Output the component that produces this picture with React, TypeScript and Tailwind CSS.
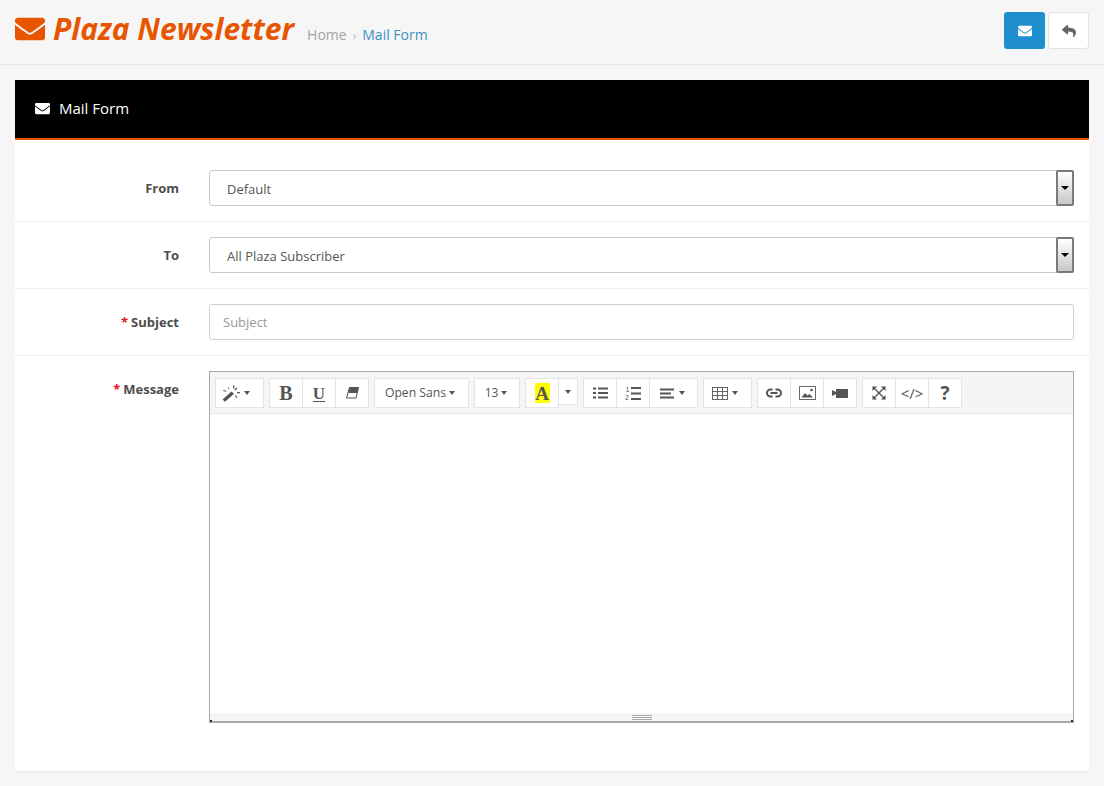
import { ReactNode } from 'react'
import { FaEnvelope, FaReply } from 'react-icons/fa'

const Caret = () => <span className="inline-block border-x-[3.5px] border-t-[4px] border-x-transparent border-t-[#555]" />

const WandIcon = () => (
  <svg width="19" height="17" viewBox="0 0 19 17" fill="#555">
    <path d="M0.500 14.500L9.500 6.500l2.500 2.200-9 8z" />
    <path d="M6 1.500l1.500 2.500-1 .5zM11 0.500h1.300v3H11zM14.500 2.500l1 1-2.500 2-.8-.8zM15 7h3v1.200h-3zM13.500 10l2 2.500-1 .5-1.700-2.300zM1.500 5l3 .8-.3 1-3-.8z" />
  </svg>
)

const EraserIcon = () => (
  <svg width="13" height="12" viewBox="0 0 13 12">
    <path d="M3.500 0.500H12.500L10 11H0.500z" fill="none" stroke="#555" strokeWidth="1" />
    <path d="M3.500 0.500H12.500L11.200 6H2.100z" fill="#555" />
  </svg>
)

const ListUlIcon = () => (
  <svg width="15" height="12" viewBox="0 0 15 12" fill="#555">
    <path d="M0 0.500h3v2H0zM5 0.500h10v2H5zM0 5h3v2H0zM5 5h10v2H5zM0 9.500h3v2H0zM5 9.500h10v2H5z" />
  </svg>
)

const ListOlIcon = () => (
  <svg width="16" height="15" viewBox="0 0 16 15" fill="#555">
    <path d="M6 1h10v2H6zM6 6.500h10v2H6zM6 12h10v2H6z" />
    <text x="0.500" y="6" fontSize="7" fontFamily="'Liberation Sans', sans-serif">1</text>
    <text x="0" y="14" fontSize="7" fontFamily="'Liberation Sans', sans-serif">2</text>
  </svg>
)

const AlignIcon = () => (
  <svg width="14" height="11" viewBox="0 0 14 11" fill="#555">
    <path d="M0 0.500h14v2H0zM0 4.500h11v2H0zM0 8.500h14v2H0z" />
  </svg>
)

const TableIcon = () => (
  <svg width="16" height="13" viewBox="0 0 16 13" fill="none" stroke="#666" strokeWidth="1">
    <rect x="0.500" y="0.500" width="15" height="12" />
    <path d="M5.500 0.500v12M10.500 0.500v12M0.500 4.500h15M0.500 8.500h15" />
  </svg>
)

const LinkIcon = () => (
  <svg width="16" height="10" viewBox="0 0 16 10" fill="none" stroke="#555" strokeWidth="2">
    <path d="M6.500 1.500H4.500a3.500 3.500 0 0 0 0 7h2M9.500 1.500h2a3.500 3.500 0 0 1 0 7h-2M4.500 5h7" />
  </svg>
)

const ImageIcon = () => (
  <svg width="17" height="14" viewBox="0 0 17 14">
    <rect x="0.500" y="0.500" width="16" height="13" fill="none" stroke="#666" strokeWidth="1" />
    <path d="M2.500 11.500l3.500-4.500 2.500 2.500 2-1.500 3.500 3.500z" fill="#555" />
    <circle cx="12.500" cy="4" r="1.300" fill="#555" />
  </svg>
)

const VideoIcon = () => (
  <svg width="16" height="10" viewBox="0 0 16 10" fill="#555">
    <path d="M0 2l4 2V1h12v9H4V6l-4 2z" />
  </svg>
)

const ExpandIcon = () => (
  <svg width="14" height="14" viewBox="0 0 14 14">
    <path d="M1 1l12 12M13 1L1 13" stroke="#555" strokeWidth="1.400" fill="none" />
    <path d="M0.500 0.500h4.500L0.500 5zM13.500 0.500V5L9 0.500zM0.500 13.500V9L5 13.500zM13.500 13.500H9L13.500 9z" fill="#555" />
  </svg>
)

const Serif = ({ children, className = '' }: { children: ReactNode; className?: string }) => (
  <span className={`font-['Liberation_Serif',serif] font-bold leading-none text-[#555] ${className}`}>{children}</span>
)

const ToolButton = ({ width, children, className = '' }: { width: string; children: ReactNode; className?: string }) => (
  <div className={`flex h-[30px] items-center justify-center gap-[3px] border border-[#e4e4e4] bg-white text-[#555] ${width} ${className}`}>
    {children}
  </div>
)

const Group = ({ children }: { children: ReactNode }) => <div className="flex items-start [&>div+div]:-ml-px">{children}</div>

const FormRow = ({
  label,
  required,
  children,
  className = '',
}: {
  label: string
  required?: boolean
  children: ReactNode
  className?: string
}) => (
  <div className={`flex border-b border-[#ededed] pr-[15px] ${className}`}>
    <div className="w-[194px] shrink-0 pr-[30px] pt-[9px] text-right text-[13px] font-bold leading-[18px] text-[#4d4d4d]">
      {required && <span className="mr-[3px] text-[#e8101c]">*</span>}
      {label}
    </div>
    <div className="min-w-0 flex-1">{children}</div>
  </div>
)

const SelectBox = ({ value }: { value: string }) => (
  <div className="relative h-9">
    <select className="h-9 w-full appearance-none rounded-[3px] border border-[#c9c9c9] bg-white pl-[17px] pt-[3px] text-[13px] text-[#555] outline-none">
      <option>{value}</option>
    </select>
    <div className="absolute right-0 top-0 flex h-9 w-[18px] items-center justify-center rounded-[2px] border-2 border-[#7a7a7a] bg-gradient-to-b from-white to-[#c8c8c8]">
      <span className="border-x-[4px] border-t-[4px] border-x-transparent border-t-black" />
    </div>
  </div>
)

export default function App() {
  return (
    <div className="min-h-[786px] bg-[#f6f6f6] font-['Open_Sans',sans-serif]">
      <header className="flex h-[65px] items-start justify-between border-b border-[#e6e6e6] px-[15px]">
        <div className="flex items-center pt-[9px]">
          <FaEnvelope className="text-[30px] text-[#e85500]" />
          <h1 className="ml-[8px] text-[30px] font-bold italic leading-[40px] text-[#e85500]">Plaza Newsletter</h1>
          <nav className="ml-[13px] flex items-center pt-[11px] text-[14px] leading-[20px] text-[#a3a3a3]">
            Home
            <span className="mx-[6px] pt-[2px] text-[12px] text-[#bbb]">›</span>
            <span className="text-[#3d92c4]">Mail Form</span>
          </nav>
        </div>
        <div className="mt-[12px] flex gap-[3px]">
          <div className="flex h-[37px] w-[41px] items-center justify-center rounded-[3px] bg-[#1e8ecf] text-white">
            <FaEnvelope className="text-[14px]" />
          </div>
          <div className="flex h-[37px] w-[41px] items-center justify-center rounded-[3px] border border-[#e2e2e2] bg-white text-[#666]">
            <FaReply className="text-[14px]" />
          </div>
        </div>
      </header>

      <main className="px-[15px] pt-[15px]">
        <section className="h-[693px] border-b-2 border-[#eeeeee] bg-white">
          <div className="flex h-[60px] items-center border-b-2 border-[#e85500] bg-black pb-[2px] pl-[20px] text-[15px] text-white">
            <FaEnvelope className="mr-[9px] text-[15px]" />
            Mail Form
          </div>

          <FormRow label="From" className="h-[82px] pt-[30px]">
            <SelectBox value="Default" />
          </FormRow>
          <FormRow label="To" className="h-[67px] pt-[15px]">
            <SelectBox value="All Plaza Subscriber" />
          </FormRow>
          <FormRow label="Subject" required className="h-[67px] pt-[15px]">
            <input
              placeholder="Subject"
              className="h-9 w-full rounded-[3px] border border-[#cfcfcf] px-[13px] text-[13px] text-[#555] outline-none placeholder:text-[#9a9a9a]"
            />
          </FormRow>
          <div className="flex pr-[15px] pt-[15px]">
            <div className="w-[194px] shrink-0 pr-[30px] pt-[9px] text-right text-[13px] font-bold leading-[18px] text-[#4d4d4d]">
              <span className="mr-[3px] text-[#e8101c]">*</span>Message
            </div>
            <div className="relative flex h-[352px] flex-1 flex-col border border-b-2 border-[#a9a9a9]">
              <div className="flex h-[42px] gap-[5px] border-b border-[#e6e6e6] bg-[#f5f5f5] pl-[5px] pt-[6px]">
                <Group>
                  <ToolButton width="w-[49px]" className="gap-0 pr-[7px]">
                    <WandIcon />
                    <Caret />
                  </ToolButton>
                </Group>
                <Group>
                  <ToolButton width="w-[34px]"><Serif className="text-[20px]">B</Serif></ToolButton>
                  <ToolButton width="w-[34px]"><Serif className="text-[17px] underline underline-offset-2">U</Serif></ToolButton>
                  <ToolButton width="w-[34px]"><EraserIcon /></ToolButton>
                </Group>
                <Group>
                  <ToolButton width="w-[95px]" className="pr-[3px] text-[12.2px]">Open Sans <Caret /></ToolButton>
                </Group>
                <Group>
                  <ToolButton width="w-[46px]" className="gap-0 pr-[2px] text-[12px]">13<Caret /></ToolButton>
                </Group>
                <Group>
                  <ToolButton width="w-[34px]">
                    <span className="flex h-[20px] w-[15px] items-center justify-center bg-[#ffff00]">
                      <Serif className="text-[19px]">A</Serif>
                    </span>
                  </ToolButton>
                  <ToolButton width="w-[20px]" className="!h-[27px]"><Caret /></ToolButton>
                </Group>
                <Group>
                  <ToolButton width="w-[34px]"><ListUlIcon /></ToolButton>
                  <ToolButton width="w-[34px]"><ListOlIcon /></ToolButton>
                  <ToolButton width="w-[49px]" className="gap-[5px] pr-[3px]"><AlignIcon /><Caret /></ToolButton>
                </Group>
                <Group>
                  <ToolButton width="w-[49px]" className="gap-[4px] pr-[5px]"><TableIcon /><Caret /></ToolButton>
                </Group>
                <Group>
                  <ToolButton width="w-[34px]"><LinkIcon /></ToolButton>
                  <ToolButton width="w-[34px]"><ImageIcon /></ToolButton>
                  <ToolButton width="w-[34px]"><VideoIcon /></ToolButton>
                </Group>
                <Group>
                  <ToolButton width="w-[34px]"><ExpandIcon /></ToolButton>
                  <ToolButton width="w-[34px]" className="text-[15px]">&lt;/&gt;</ToolButton>
                  <ToolButton width="w-[34px]" className="text-[19px] font-bold">?</ToolButton>
                </Group>
              </div>
              <div className="flex-1 bg-white" />
              <div className="flex h-[8px] flex-col items-center justify-center gap-px bg-[#f5f5f5]">
                <span className="h-px w-[20px] bg-[#a9a9a9]" />
                <span className="h-px w-[20px] bg-[#a9a9a9]" />
                <span className="h-px w-[20px] bg-[#a9a9a9]" />
              </div>
              <span className="absolute -bottom-px left-0 h-[2px] w-[2px] bg-[#333]" />
              <span className="absolute -bottom-px right-0 h-[2px] w-[2px] bg-[#333]" />
            </div>
          </div>
        </section>
      </main>
    </div>
  )
}
